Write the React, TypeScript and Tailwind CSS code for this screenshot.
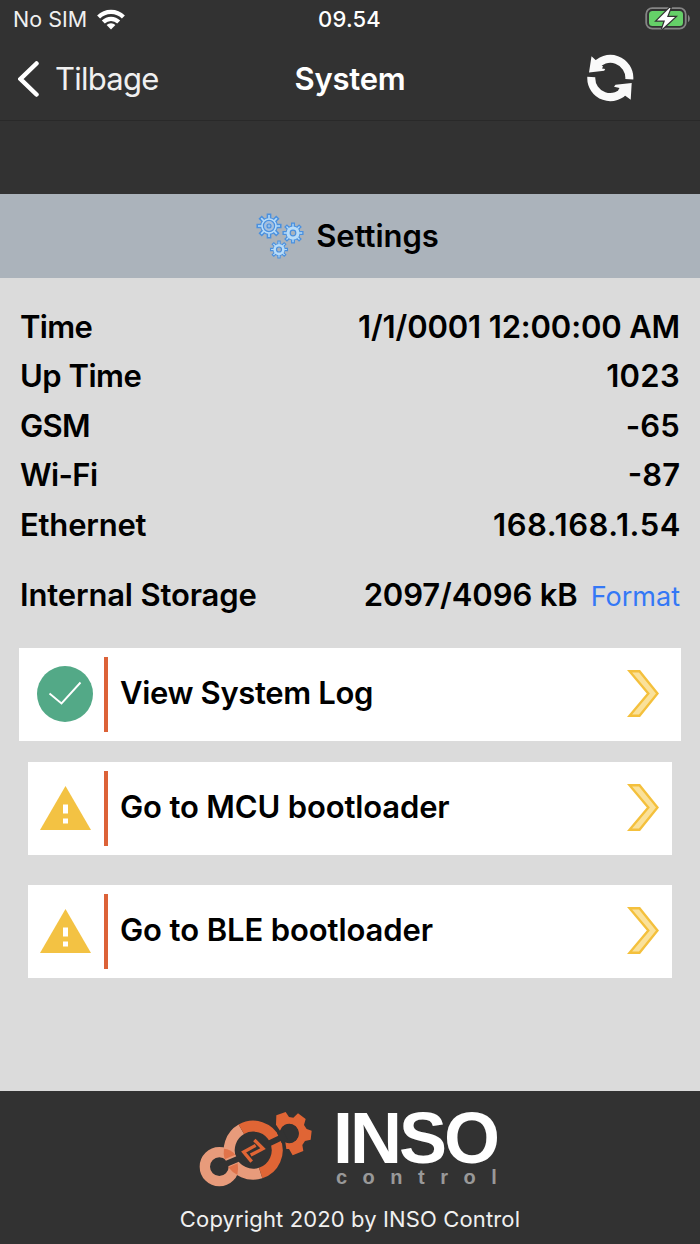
import type { ReactNode } from 'react';

interface InfoRow {
  label: string
  value: string
  labelClass: string
  valueClass: string
}

const rows: InfoRow[] = [
  { label: 'Time', value: '1/1/0001 12:00:00 AM', labelClass: 'tracking-[-0.7px]', valueClass: 'tracking-[-0.15px]' },
  { label: 'Up Time', value: '1023', labelClass: 'tracking-[-0.5px]', valueClass: 'tracking-[0.3px]' },
  { label: 'GSM', value: '-65', labelClass: 'tracking-[-0.7px]', valueClass: 'tracking-[0.2px]' },
  { label: 'Wi-Fi', value: '-87', labelClass: 'tracking-[-0.6px]', valueClass: 'tracking-normal' },
  { label: 'Ethernet', value: '168.168.1.54', labelClass: 'tracking-[-0.2px]', valueClass: 'tracking-[0.55px] -mr-px' },
]

function WifiIcon() {
  return (
    <svg className="ml-[10px] h-[21px] w-7" viewBox="0 0 28 21" fill="none" stroke="#fff" strokeWidth="4.2">
      <path d="M1.6 8a17.6 17.6 0 0 1 24.8 0" />
      <path d="M6.3 13a10.9 10.9 0 0 1 15.4 0" />
      <path d="M14 20.5l-4.4-4.5a6.2 6.2 0 0 1 8.8 0z" fill="#fff" stroke="none" />
    </svg>
  )
}

function BatteryIcon() {
  return (
    <svg className="h-6 w-[46px]" viewBox="0 0 46 24">
      <rect x="1.2" y="1.2" width="39.5" height="20.5" rx="6" fill="none" stroke="#858585" strokeWidth="1.8" />
      <path d="M43 8v7c2.4-1 2.4-6 0-7z" fill="#858585" />
      <rect x="4" y="4" width="34" height="15" rx="3.5" fill="#65d068" />
      <path d="M24.5 1L12 13.5h8L17 22 30 10h-8L25.5 1z" fill="#fff" stroke="#323232" strokeWidth="2.4" paintOrder="stroke" />
    </svg>
  )
}

function RefreshIcon() {
  return (
    <svg className="-mt-[3px] h-12 w-12" viewBox="0 0 48 48">
      <path d="M8.7 13.1A19 19 0 0 1 43.3 25.3" fill="none" stroke="#fafafa" strokeWidth="8" />
      <path d="M39.9 34.9A19 19 0 0 1 5.3 23" fill="none" stroke="#fafafa" strokeWidth="8" />
      <path d="M5.5 2.3l3 2.7L17 12.5l-1 2 3.2.5-1 1.7L3 18.5z" fill="#fafafa" />
      <path d="M44.7 45.7l-3-2.2L32 36.5l1.5-2.5-5.5-1.2 1.5-2 16.2-1.8z" fill="#fafafa" />
    </svg>
  )
}

function Gear({ x, y, r }: { x: number; y: number; r: number }) {
  const teeth = [0, 45, 90, 135, 180, 225, 270, 315]
  return (
    <g transform={`translate(${x} ${y}) scale(${r / 12})`}>
      <circle r="8.5" fill="#4a90df" />
      {teeth.map(a => (
        <path key={a} d="M-1.5-7v-4.3h3V-7" transform={`rotate(${a})`} fill="#b5dcfa" stroke="#4a90df" strokeWidth="1.5" />
      ))}
      <circle r="7.5" fill="#b9dcf8" />
    </g>
  )
}

function GearsIcon() {
  return (
    <svg className="h-[46px] w-12" viewBox="0 0 48 46">
      <Gear x={13} y={13} r={12.5} />
      <circle cx="13" cy="13" r="5.6" fill="#a5bfdd" stroke="#4a90df" strokeWidth="1.2" />
      <circle cx="13" cy="13" r="2" fill="#8fbce9" stroke="#4a90df" strokeWidth="1.2" />
      <Gear x={37} y={20} r={10.5} />
      <circle cx="37" cy="20" r="2.8" fill="#abb3bb" stroke="#4a90df" strokeWidth="1.2" />
      <Gear x={23} y={36.5} r={9} />
      <circle cx="23" cy="36.5" r="2.5" fill="#abb3bb" stroke="#4a90df" strokeWidth="1.2" />
    </svg>
  )
}

function CheckIcon() {
  return (
    <svg className="h-14 w-14" viewBox="0 0 56 56">
      <circle cx="28" cy="28" r="28" fill="#53a987" />
      <path d="M12.5 27.5l12 10L43.5 16.5" fill="none" stroke="#fff" strokeWidth="1.9" />
    </svg>
  )
}

function WarningIcon() {
  return (
    <svg className="h-11 w-[51px]" viewBox="0 0 51 44">
      <path d="M25.5 0L51 44H0z" fill="#f3c243" />
      <path d="M23 18.500h5v9h-5zM23 32.500h5v5h-5z" fill="#fff" />
    </svg>
  )
}

function ArrowIcon() {
  return (
    <svg className="-mt-px h-[47px] w-8" viewBox="0 0 32 47">
      <path d="M2.5 1.2h10L30.5 23.5l-18 22.3h-10l18.800-22.300z" fill="#fae19a" stroke="#f4c03c" strokeWidth="2.4" />
    </svg>
  )
}

function LogoIcon() {
  return (
    <svg className="h-[76px] w-[113px]" viewBox="27 93 339 228" fill="none">
      <circle cx="88" cy="260" r="43.5" stroke="#e89b7b" strokeWidth="31" />
      <path d="M154 148A72 72 0 0 0 212 279" stroke="#e89b7b" strokeWidth="33" />
      <path d="M154 148A72 72 0 1 1 212 279" stroke="#e06535" strokeWidth="33" />
      <path d="M102 206Q122 207 136 224L104 238Q99 222 102 206z" fill="#e0734a" />
      <path d="M115 262L143 250Q146 270 142 284Q126 277 115 262z" fill="#e0734a" />
      <path d="M88 260L152 233M225 196L300 160" stroke="#323232" strokeWidth="18" />
      <path
        d="M259 106l28-10 10 15 13 2 14-13 23 17-5 18 8 12 15 5-3 27-17 4-8 12 3 18-32 13-11-19h-8l-3-20a29 29 0 1 0-16-35l-12-18z"
        fill="#e06535"
      />
      <circle cx="298" cy="161" r="28" fill="#323232" />
      <path d="M261 159l17-9 15 31-18 8z" fill="#323232" />
      <path d="M193 180L219 206L182 225M197 196L161 216L185 245" stroke="#e06535" strokeWidth="10" />
    </svg>
  )
}

function MenuCard({ title, icon, className }: { title: string; icon: ReactNode; className: string }) {
  return (
    <button className={`flex h-[93px] items-center bg-white text-left ${className}`}>
      <span className="flex w-14 justify-center">{icon}</span>
      <span className="ml-[11px] h-[75px] w-1 bg-[#dc6238]" />
      <span className="ml-3 flex-1 pb-0.5">{title}</span>
      <ArrowIcon />
    </button>
  )
}

export default function App() {
  return (
    <div className="flex h-[1244px] w-[700px] flex-col overflow-hidden bg-[#dbdbdb] font-['Inter',sans-serif] text-black">
      <header className="h-[194px] bg-[#323232] text-white">
        <div className="grid h-[38px] grid-cols-3 items-center pr-[9px] pl-[13px]">
          <div className="flex items-center text-[21.5px] text-[#f0f0f0]">No SIM<WifiIcon /></div>
          <span className="pr-[5px] text-center text-[22px] font-medium tracking-[0.2px]">09.54</span>
          <div className="flex justify-end"><BatteryIcon /></div>
        </div>
        <nav className="grid h-[83px] grid-cols-3 items-center border-b border-[#292929] px-[18px]">
          <button className="flex items-center text-[31px] tracking-[-0.75px] text-[#f0f0f0]">
            <svg className="mr-[15px] h-9 w-[22px]" viewBox="0 0 22 36" fill="none" stroke="#fff" strokeWidth="4.5" strokeLinecap="round">
              <path d="M18.5 2.5L2.500 18l16 15.500" />
            </svg>
            Tilbage
          </button>
          <h1 className="text-center text-[31px] font-semibold tracking-[-0.2px]">System</h1>
          <div className="flex justify-end pr-12"><RefreshIcon /></div>
        </nav>
      </header>

      <div className="flex h-[84px] items-center justify-center bg-[#abb3bb] pr-[5px]">
        <GearsIcon />
        <h2 className="ml-3 text-[31px] font-semibold tracking-[-0.05px]">Settings</h2>
      </div>

      <main className="flex flex-1 flex-col pt-[24.6px] text-[31px] font-semibold">
        {rows.map(row => (
          <div key={row.label} className="flex h-[49.4px] items-center justify-between px-5">
            <span className={row.labelClass}>{row.label}</span>
            <span className={row.valueClass}>{row.value}</span>
          </div>
        ))}
        <div className="mt-[21px] flex h-[49px] items-center px-5">
          <span className="flex-1 tracking-[-0.15px]">Internal Storage</span>
          <span className="tracking-[-0.1px]">2097/4096 kB</span>
          <button className="ml-[13px] pt-1 text-[27px] font-normal text-[#3478f6]">Format</button>
        </div>
        <MenuCard title="View System Log" icon={<CheckIcon />} className="mx-[19px] mt-[28.4px] pr-[22px] pl-[18px] tracking-[-0.35px]" />
        <MenuCard title="Go to MCU bootloader" icon={<WarningIcon />} className="mx-7 mt-[21px] pr-[13px] pl-[9px] tracking-[-0.15px]" />
        <MenuCard title="Go to BLE bootloader" icon={<WarningIcon />} className="mx-7 mt-[30px] pr-[13px] pl-[9px] tracking-[-0.1px]" />
      </main>

      <footer className="flex h-[153px] flex-col items-center bg-[#323232] text-white">
        <div className="flex w-full pt-5 pl-[199px]">
          <LogoIcon />
          <div className="ml-[21px] flex flex-col">
            <span className="h-[54px] font-['Liberation_Sans',sans-serif] text-[72px] leading-[54px] font-bold tracking-[-3px]">INSO</span>
            <span className="mt-[2px] ml-[3px] font-['Liberation_Sans',sans-serif] text-[20px] leading-[20px] font-bold tracking-[15.5px] text-[#999999]">control</span>
          </div>
        </div>
        <p className="mt-4 text-[22px] leading-8 tracking-[0.13px] text-[#f0f0f0]">Copyright 2020 by INSO Control</p>
      </footer>
    </div>
  )
}
